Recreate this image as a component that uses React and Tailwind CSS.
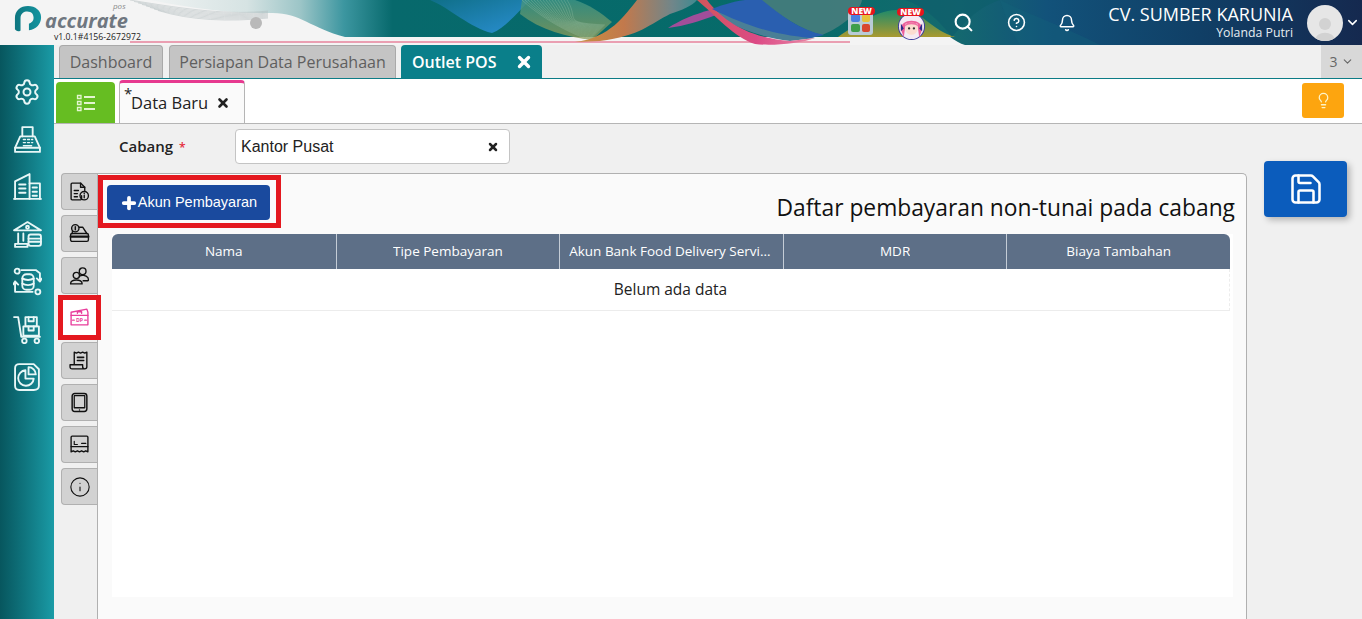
import { Settings, Search, CircleHelp, Bell, Lightbulb, Save, ChevronDown, X, Plus, Info } from 'lucide-react'

const sans = "font-['Open_Sans','Noto_Sans',sans-serif]"

const strands = Array.from({ length: 16 }, (_, i) => i)

const HeaderWaves = () => (
  <svg className="absolute inset-0" width="1362" height="45" viewBox="0 0 1362 45">
    <defs>
      <linearGradient id="base" gradientUnits="userSpaceOnUse" x1="150" x2="1362" y1="0" y2="0">
        <stop offset="0" stopColor="#f0f3f3" />
        <stop offset="0.08" stopColor="#d6e3e3" />
        <stop offset="0.124" stopColor="#9cc5c7" />
        <stop offset="0.16" stopColor="#3c96a0" />
        <stop offset="0.2" stopColor="#07696c" />
        <stop offset="0.53" stopColor="#066b69" />
        <stop offset="0.66" stopColor="#146a6e" />
        <stop offset="0.74" stopColor="#12527a" />
        <stop offset="0.866" stopColor="#103f66" />
        <stop offset="1" stopColor="#15294f" />
      </linearGradient>
      <linearGradient id="orange" x1="0" x2="1" y1="0" y2="0">
        <stop offset="0" stopColor="#c8913f" />
        <stop offset="0.4" stopColor="#c2794c" />
        <stop offset="0.8" stopColor="#70868a" />
        <stop offset="1" stopColor="#3f8a90" />
      </linearGradient>
      <linearGradient id="pink" x1="0" x2="1" y1="0" y2="0">
        <stop offset="0" stopColor="#d0565a" />
        <stop offset="0.5" stopColor="#dc4a85" />
        <stop offset="1" stopColor="#e88aa8" />
      </linearGradient>
      <linearGradient id="olive" x1="0" x2="0" y1="0" y2="1">
        <stop offset="0" stopColor="#1f8a6a" />
        <stop offset="1" stopColor="#a99a30" />
      </linearGradient>
      <linearGradient id="sky" x1="0" x2="1" y1="0" y2="1">
        <stop offset="0" stopColor="#0f6f88" />
        <stop offset="1" stopColor="#2a8fd2" />
      </linearGradient>
      <linearGradient id="strandFill" x1="0" x2="0" y1="0" y2="1">
        <stop offset="0" stopColor="#3f9484" />
        <stop offset="1" stopColor="#8f9a55" />
      </linearGradient>
      <linearGradient id="logoFill" x1="0" x2="1" y1="0" y2="0">
        <stop offset="0" stopColor="#0e7680" />
        <stop offset="1" stopColor="#1494a0" />
      </linearGradient>
    </defs>
    <rect x="130" y="41" width="720" height="2" fill="#ea9fb2" />
    <path d="M150 0 C200 10 240 14 270 13 C300 12 310 28 345 37 L950 37 C955 40 960 44 965 45 L1362 45 L1362 0 Z" fill="url(#base)" />
    <path d="M430 0 C450 8 470 28 492 33 C505 28 518 12 530 0 Z" fill="url(#sky)" />
    <path d="M520 14 C540 30 568 37 592 40 L612 22 C600 12 590 5 575 0 L522 0Z" fill="url(#strandFill)" opacity="0.8" />
    {strands.map((i) => (
      <path key={i} d={`M${522 + i * 3} 0 C${535 + i * 3} ${12 + i / 2} 560 ${30 - i / 2} ${590 + i} ${40 - i}`} fill="none" stroke="#b4d2bc" strokeWidth="0.5" opacity="0.5" />
    ))}
    {strands.slice(0, 8).map((i) => (
      <path key={i} d={`M${130 + i * 4} ${i * 1.5} C190 ${10 + i * 1.5} 230 ${15 + i} 268 ${11 + i}`} fill="none" stroke="#b3bcbf" strokeWidth="0.5" />
    ))}
    <path d="M575 42 C610 38 625 15 637 0 L697 0 C692 6 682 10 670 14 C650 24 640 36 600 41Z" fill="url(#orange)" />
    <path d="M760 0 L862 0 C860 12 840 28 822 35 C800 30 780 15 760 0Z" fill="#4f7f80" opacity="0.8" />
    <path d="M705 6 C720 20 750 36 790 41 L815 38 C790 30 750 20 712 10Z" fill="#4a7f96" />
    <path d="M668 28 C680 20 695 14 710 10 L716 15 C700 21 685 26 668 28Z" fill="#a04e9a" />
    <path d="M697 0 L707 0 C722 20 748 38 790 41 L815 38 C800 44 770 46 755 44 C735 38 715 15 697 0Z" fill="url(#pink)" />
    <path d="M712 9 C720 6 730 2 745 0 L762 0 C780 15 800 30 824 35 L810 38 C770 34 745 25 712 9Z" fill="#2a5fb0" />
    <path d="M838 37 C860 22 880 8 905 10 C925 14 932 30 955 37Z" fill="url(#olive)" />
    <path d="M905 0 L1000 0 C975 8 962 26 952 37 C940 22 925 6 905 0Z" fill="#0f5f6c" opacity="0.75" />
    <path d="M1000 0 C1030 15 1060 25 1100 45 L1020 45 C1010 30 1005 15 1000 0Z" fill="#14637a" opacity="0.35" />
  </svg>
)

const Logo = () => (
  <svg width="28" height="28" viewBox="0 0 28 30">
    <path d="M1 27 C3 29 6 28 6 27 V14 C6 9 10 7 13 7 C18 7 20 10 20 14 C20 17 18 19 15 20 V27 C23 26 28 20 28 13 C28 6 22 1 14 1 C6 1 0 6 0 14 V26Z" fill="url(#logoFill)" />
  </svg>
)

const NewTag = () => (
  <span className="absolute left-0 top-0 rounded-full bg-[#e8141c] px-[3px] text-[8.5px] font-extrabold leading-[8px] text-white">NEW</span>
)

const AppsBadge = () => (
  <div className="relative h-[32px] w-[29px]">
    <div className="absolute left-0 top-[4px] grid h-[24px] w-[25px] grid-cols-2 gap-[2px] rounded-[3px] bg-[#b9cbd6] p-[3px]">
      <span className="rounded-[2px] bg-[#4a7fe0]" />
      <span className="rounded-[2px] bg-[#e6c13a]" />
      <span className="rounded-[2px] bg-[#3f9e4d]" />
      <span className="rounded-[2px] bg-[#d8452f]" />
    </div>
    <NewTag />
  </div>
)

const MascotBadge = () => (
  <div className="relative h-[32px] w-[30px]">
    <svg className="absolute left-0 top-[4px]" width="29" height="29" viewBox="0 0 28 30">
      <circle cx="14" cy="15" r="14" fill="#3c3c9e" />
      <circle cx="14" cy="15" r="13" fill="#f5eaf2" />
      <path d="M3 18 C2 6 26 6 25 18 L22 26 L20 12 L8 12 L6 26Z" fill="#ec5f9a" />
      <circle cx="14" cy="17" r="6.5" fill="#fbdcd0" />
      <path d="M7 15 C8 9 20 9 21 15 C17 12 11 12 7 15Z" fill="#ef6fa3" />
      <circle cx="11.5" cy="17" r="1.2" fill="#333" />
      <circle cx="16.5" cy="17" r="1.2" fill="#333" />
      <path d="M3 12 L6 17 L3 20Z M25 12 L22 17 L25 20Z" fill="#2c2c86" />
    </svg>
    <NewTag />
  </div>
)

const NavIcon = ({ children }) => (
  <svg width="29" height="29" viewBox="0 0 28 28" fill="none" stroke="currentColor" strokeWidth="1.8" strokeLinejoin="round" strokeLinecap="round">
    {children}
  </svg>
)

const navIcons = [
  <Settings key="a" size={28} strokeWidth={1.7} />,
  <NavIcon key="b">
    <path d="M9 11 V2 H19 V11" />
    <path d="M7 11 H21 L26 22 V26 H2 V22Z" />
    <path d="M2 22 H26" />
    <path d="M10 14 H12 M14 14 H16 M18 14 H19 M10 17 H12 M14 17 H16 M18 17 H19 M10 20 H18" strokeWidth="1.3" />
  </NavIcon>,
  <NavIcon key="c">
    <path d="M1 26 H27" />
    <path d="M2 26 V9 L16 2 V26" />
    <path d="M16 11 H26 V26" />
    <path d="M6 12 H12 M6 16 H12 M6 20 H12 M19 15 H23 M19 19 H23 M19 23 H23" strokeWidth="2" />
  </NavIcon>,
  <NavIcon key="d">
    <path d="M1 10 L14 2 L27 10 Z" />
    <path d="M5 13 V23 M10 13 V20 M2 26 H14 V23 H2Z" />
    <rect x="15" y="14" width="12" height="11" rx="2" />
    <path d="M15 18 H27 M15 21 H27" />
    <circle cx="14" cy="7" r="1.4" />
  </NavIcon>,
  <NavIcon key="e">
    <rect x="9" y="7" width="11" height="15" rx="4" />
    <path d="M9 11 C12 13 17 13 20 11 M9 16 C12 18 17 18 20 16" />
    <circle cx="4" cy="4" r="2.4" />
    <circle cx="24" cy="24" r="2.4" />
    <path d="M8 3 H22 L26 6 V14 M26 14 L28 11 M26 14 L23 11 M2 14 V24 H19 M0 17 L2 14 L5 17" />
  </NavIcon>,
  <NavIcon key="f">
    <path d="M1 2 H5 L8 21 H26" />
    <circle cx="11" cy="25" r="2.2" />
    <circle cx="23" cy="25" r="2.2" />
    <rect x="12" y="2" width="11" height="9" />
    <rect x="10" y="11" width="15" height="9" />
    <path d="M15 2 V6 H20 V2 M15 11 V15 H20 V11" />
  </NavIcon>,
  <NavIcon key="g">
    <path d="M20 2 H6 Q2 2 2 6 V23 Q2 27 6 27 H20 Q25 27 25 23 V7Z" />
    <path d="M12 8 A7.5 7.5 0 1 0 20 16 H12Z" />
    <path d="M15 5 A7 7 0 0 1 22 12 H15Z" />
  </NavIcon>,
]

const TabIcon = ({ children, color = 'currentColor' }) => (
  <svg width="21" height="21" viewBox="0 0 20 20" fill="none" stroke={color} strokeWidth="1.3" strokeLinejoin="round" strokeLinecap="round">
    {children}
  </svg>
)

const sideTabs = [
  <TabIcon key="1">
    <path d="M12 14 V17 Q12 18 11 18 H3 Q2 18 2 17 V3 Q2 2 3 2 H11 L15 6 V9" />
    <path d="M11 2 V6 H15 M5 9 H9 M5 12 H8 M5 15 H8" />
    <circle cx="14.5" cy="14" r="4" />
    <path d="M14.5 13.5 V16 M14.5 11.5 V12" />
  </TabIcon>,
  <TabIcon key="2">
    <rect x="1.5" y="10" width="17" height="7.5" rx="1.5" />
    <path d="M1.5 13 H18.5" strokeWidth="2" />
    <path d="M3 10 C3 6 5 4 7 4 H13 L17 10" />
    <circle cx="6" cy="5" r="3.5" fill="#bbb" />
    <path d="M6 3.5 V6.5" />
  </TabIcon>,
  <TabIcon key="3">
    <circle cx="13" cy="6" r="3.2" />
    <path d="M10 10.5 C12 9.5 16 9.5 18 12 Q19 15 18 15 H13.5" />
    <circle cx="7" cy="10" r="3" />
    <path d="M1.5 18 C1 13 13 13 12.5 18Z" />
  </TabIcon>,
  <TabIcon key="4" color="#e83e9c">
    <path d="M2 5 L17 2 L18 5 V17 H2Z" />
    <path d="M2 8 H18" />
    <path d="M8 6 V4.5 H12 V6" />
    <path d="M3.5 12.5 H5 M15 12.5 H16.5" />
    <text x="10" y="14.2" textAnchor="middle" fontSize="5" fontWeight="700" fill="#e83e9c" stroke="none">DP</text>
  </TabIcon>,
  <TabIcon key="5">
    <path d="M5 14 V2 L7 3 L9 2 L11 3 L13 2 L15 3 L17 2 V16 Q17 18 15 18 H3 Q1 18 1 16 V14 H13 V16 Q13 18 15 18" />
    <path d="M8 7 H14 M8 10 H14" strokeWidth="1.5" />
  </TabIcon>,
  <TabIcon key="6">
    <rect x="3" y="1.5" width="14" height="17" rx="2.5" strokeWidth="1.4" />
    <rect x="5" y="3.5" width="10" height="11.5" strokeWidth="1.2" />
    <path d="M10 17 V17.1" />
  </TabIcon>,
  <TabIcon key="7">
    <path d="M2 17 V3 Q2 2 3 2 H17 Q18 2 18 3 V17 L16 16 L14 17 L12 16 L10 17 L8 16 L6 17 L4 16Z" />
    <path d="M2 12 H18" />
    <path d="M5 7 V10 H8 M12 9 H16" strokeWidth="1.1" />
  </TabIcon>,
  <Info key="8" size={22} strokeWidth={1.2} />,
]

const columns = ['Nama', 'Tipe Pembayaran', 'Akun Bank Food Delivery Service', 'MDR', 'Biaya Tambahan']

const App = () => {
  return (
    <div className={`flex h-[619px] w-[1362px] flex-col overflow-hidden bg-[#f0f0f0] text-[#222] ${sans}`}>
      {/* Header */}
      <header className="relative flex h-[45px] shrink-0 items-center bg-[#f4f4f4]">
        <HeaderWaves />
        <div className="relative flex h-full w-[150px] shrink-0 pl-[14px] pt-[5px]">
          <Logo />
          <div className="relative ml-[3px] leading-none">
            <div className="absolute left-[68px] top-[-3px] text-[8px] leading-[8px] italic text-[#888]">pos</div>
            <div className="mt-[7px] text-[20px] font-bold italic leading-[18px] text-[#6f7780]">accurate</div>
            <div className="ml-[9px] mt-[2px] text-[8.7px] leading-[10px] text-[#222] whitespace-nowrap">v1.0.1#4156-2672972</div>
          </div>
        </div>
        <div className="relative ml-[100px] h-3 w-3 rounded-full bg-[#b9b9b9]" />
        <div className="relative ml-auto flex h-full items-center pr-[2px] text-white">
          <div className="mr-[20px]"><AppsBadge /></div>
          <div className="mr-[26px] mt-[2px]"><MascotBadge /></div>
          <Search size={21} strokeWidth={2.4} className="mr-[33px]" />
          <CircleHelp size={19} strokeWidth={2} className="mr-[32px]" />
          <Bell size={18} strokeWidth={2} className="mr-[32px]" />
          <div className="mr-[14px] mt-[-3px] text-right">
            <div className="text-[18px] leading-[24px] whitespace-nowrap">CV. SUMBER KARUNIA</div>
            <div className="text-[12.3px] leading-[14px] text-[#e6edf2]">Yolanda Putri</div>
          </div>
          <div className="flex h-9 w-9 items-end justify-center overflow-hidden rounded-full bg-[#e6e6e6]">
            <svg width="24" height="28" viewBox="0 0 24 28">
              <circle cx="12" cy="11" r="6" fill="#d2d2d2" />
              <path d="M2 28 C2 17 22 17 22 28Z" fill="#d2d2d2" />
            </svg>
          </div>
          <ChevronDown size={15} strokeWidth={2.4} className="ml-[2px]" />
        </div>
      </header>

      <div className="flex min-h-0 flex-1">
        {/* Sidebar */}
        <aside className="flex w-[54px] shrink-0 flex-col items-center gap-[18.5px] bg-gradient-to-r from-[#07565e] to-[#1a9ba6] pt-[32px] text-[#e8f7f7]">
          {navIcons.map((icon, i) => (
            <div key={i} className="flex h-[29px] items-center justify-center">{icon}</div>
          ))}
        </aside>

        <main className="flex min-w-0 flex-1 flex-col">
          {/* Tabs */}
          <div className="flex h-[34px] shrink-0 items-end border-b border-[#0c7c86] pl-[5px]">
            <div className="mr-[6px] flex h-[33px] w-[104px] items-center justify-center rounded-t-[4px] border border-b-0 border-[#a9a9a9] bg-[#c4c4c4] text-[16px] text-[#5f5f5f]">Dashboard</div>
            <div className="mr-[5px] flex h-[33px] w-[227px] items-center justify-center rounded-t-[4px] border border-b-0 border-[#a9a9a9] bg-[#c4c4c4] text-[16px] text-[#5f5f5f]">Persiapan Data Perusahaan</div>
            <div className="flex h-[33px] w-[141px] items-center rounded-t-[4px] bg-[#0a7f8a] pl-[11px] text-[16px] font-semibold text-white">
              Outlet POS
              <X size={18} strokeWidth={4.5} className="ml-[19px]" />
            </div>
            <div className="ml-auto flex h-[33px] w-[41px] items-center justify-center gap-[3px] bg-[#d8d8d8] text-[14px] text-[#666]">
              3 <ChevronDown size={13} />
            </div>
          </div>

          {/* Toolbar */}
          <div className="flex h-[45px] shrink-0 items-end border-b border-[#b5b5b5] bg-white pl-[2px]">
            <div className="flex h-[41px] w-[59px] items-center justify-center rounded-t-[4px] bg-[#66bd22] text-[#e4f5d0]">
              <svg width="20" height="20" viewBox="0 0 20 20" fill="none" stroke="currentColor" strokeWidth="2">
                <path d="M8 4 H19 M8 10 H19 M8 16 H19" />
                <path d="M1.5 2.5 H5 V5.5 H1.5Z M1.5 8.5 H5 V11.5 H1.5Z M1.5 14.5 H5 V17.5 H1.5Z" strokeWidth="1.3" />
              </svg>
            </div>
            <div className="relative ml-[4px] flex h-[43px] w-[126px] items-center rounded-t-[4px] border-x border-[#b5b5b5] border-t-[3px] border-t-[#e6398f] bg-[#fafafa] pl-[11px] text-[16.5px] text-[#222]">
              <span className="absolute left-[4px] top-[-1px] text-[15px]">*</span>
              Data Baru
              <X size={14} strokeWidth={4.5} className="ml-[8px]" />
            </div>
            <div className="mb-[5px] ml-auto mr-[18px] flex h-[35px] w-[42px] items-center justify-center rounded-[3px] bg-[#fda50f] text-[#fdf3c8]">
              <Lightbulb size={17} strokeWidth={1.8} />
            </div>
          </div>

          <div className="flex min-h-0 flex-1">
            <div className="flex w-[1193px] shrink-0 flex-col">
              {/* Cabang */}
              <div className="flex h-[49px] shrink-0 items-center pb-[4px] pl-[65px]">
                <div className="w-[116px] text-[15px] font-semibold text-[#222]">
                  Cabang <span className="ml-[2px] text-[12px] text-[#e5283a]">*</span>
                </div>
                <div className="flex h-[35px] w-[275px] items-center justify-between rounded-[4px] border border-[#c4c4c4] bg-white pl-[5px] pr-[10px] font-['Liberation_Sans',sans-serif] text-[16px]">
                  Kantor Pusat
                  <X size={12} strokeWidth={5} />
                </div>
              </div>

              <div className="flex min-h-0 flex-1 pl-[7px]">
                {/* Vertical tabs */}
                <div className="flex w-[36px] shrink-0 flex-col gap-[5px]">
                  {sideTabs.map((icon, i) => (
                    <div key={i} className={i === 3
                      ? 'relative mb-[1px] flex h-[37px] items-center justify-center bg-white'
                      : 'flex h-[37px] items-center justify-center rounded-l-[4px] border border-r-0 border-[#b0b0b0] bg-[#d2d2d2] text-[#111]'}>
                      {icon}
                      {i === 3 && <div className="absolute left-[-3px] top-[-4px] h-[45px] w-[43px] border-[5px] border-[#e4181f]" />}
                    </div>
                  ))}
                </div>

                {/* Card */}
                <section className="flex min-w-0 flex-1 flex-col rounded-tr-[5px] border-l border-r border-t border-[#b0b0b0] bg-[#fafafa] pl-[14px] pr-[13px]">
                  <div className="relative flex h-[60px] shrink-0 items-end justify-end">
                    <button className="absolute left-[-5px] top-[11px] flex h-[35px] w-[163px] items-center justify-center rounded-[4px] bg-[#1a4a9e] font-['Liberation_Sans',sans-serif] text-[14.5px] text-white">
                      <Plus size={18} strokeWidth={5} />
                      Akun Pembayaran
                    </button>
                    <div className="absolute left-[-14px] top-[1px] h-[53px] w-[183px] border-[5px] border-[#e4181f]" />
                    <div className="mb-[10px] mr-[-2px] text-[22.8px] leading-[32px] text-[#111]">Daftar pembayaran non-tunai pada cabang</div>
                  </div>

                  <div className="mb-[22px] flex min-h-0 flex-1 flex-col bg-white">
                    <div className="mr-[3px] grid h-[35px] shrink-0 grid-cols-5 rounded-t-[6px] bg-[#5d6f87] text-[13.5px] font-medium text-white">
                      {columns.map((col, i) => (
                        <div key={col} className={i > 0 ? 'flex min-w-0 items-center justify-center border-l border-[#c4ccd6] px-[9px]' : 'flex min-w-0 items-center justify-center px-[9px]'}>
                          <span className="truncate">{col}</span>
                        </div>
                      ))}
                    </div>
                    <div className="mr-[3px] flex h-[42px] shrink-0 items-center justify-center border-b border-r border-[#ececec] text-[15.5px] text-[#222] [border-right-style:dashed]">
                      Belum ada data
                    </div>
                  </div>
                </section>
              </div>
            </div>

            {/* Save */}
            <div className="pl-[17px] pt-[37px]">
              <button className="flex h-[56px] w-[83px] items-center justify-center rounded-[4px] bg-[#0b5cbc] text-white shadow-[3px_3px_6px_rgba(0,0,0,0.25)]">
                <Save size={36} strokeWidth={1.7} />
              </button>
            </div>
          </div>
        </main>
      </div>
    </div>
  )
}

export default App
